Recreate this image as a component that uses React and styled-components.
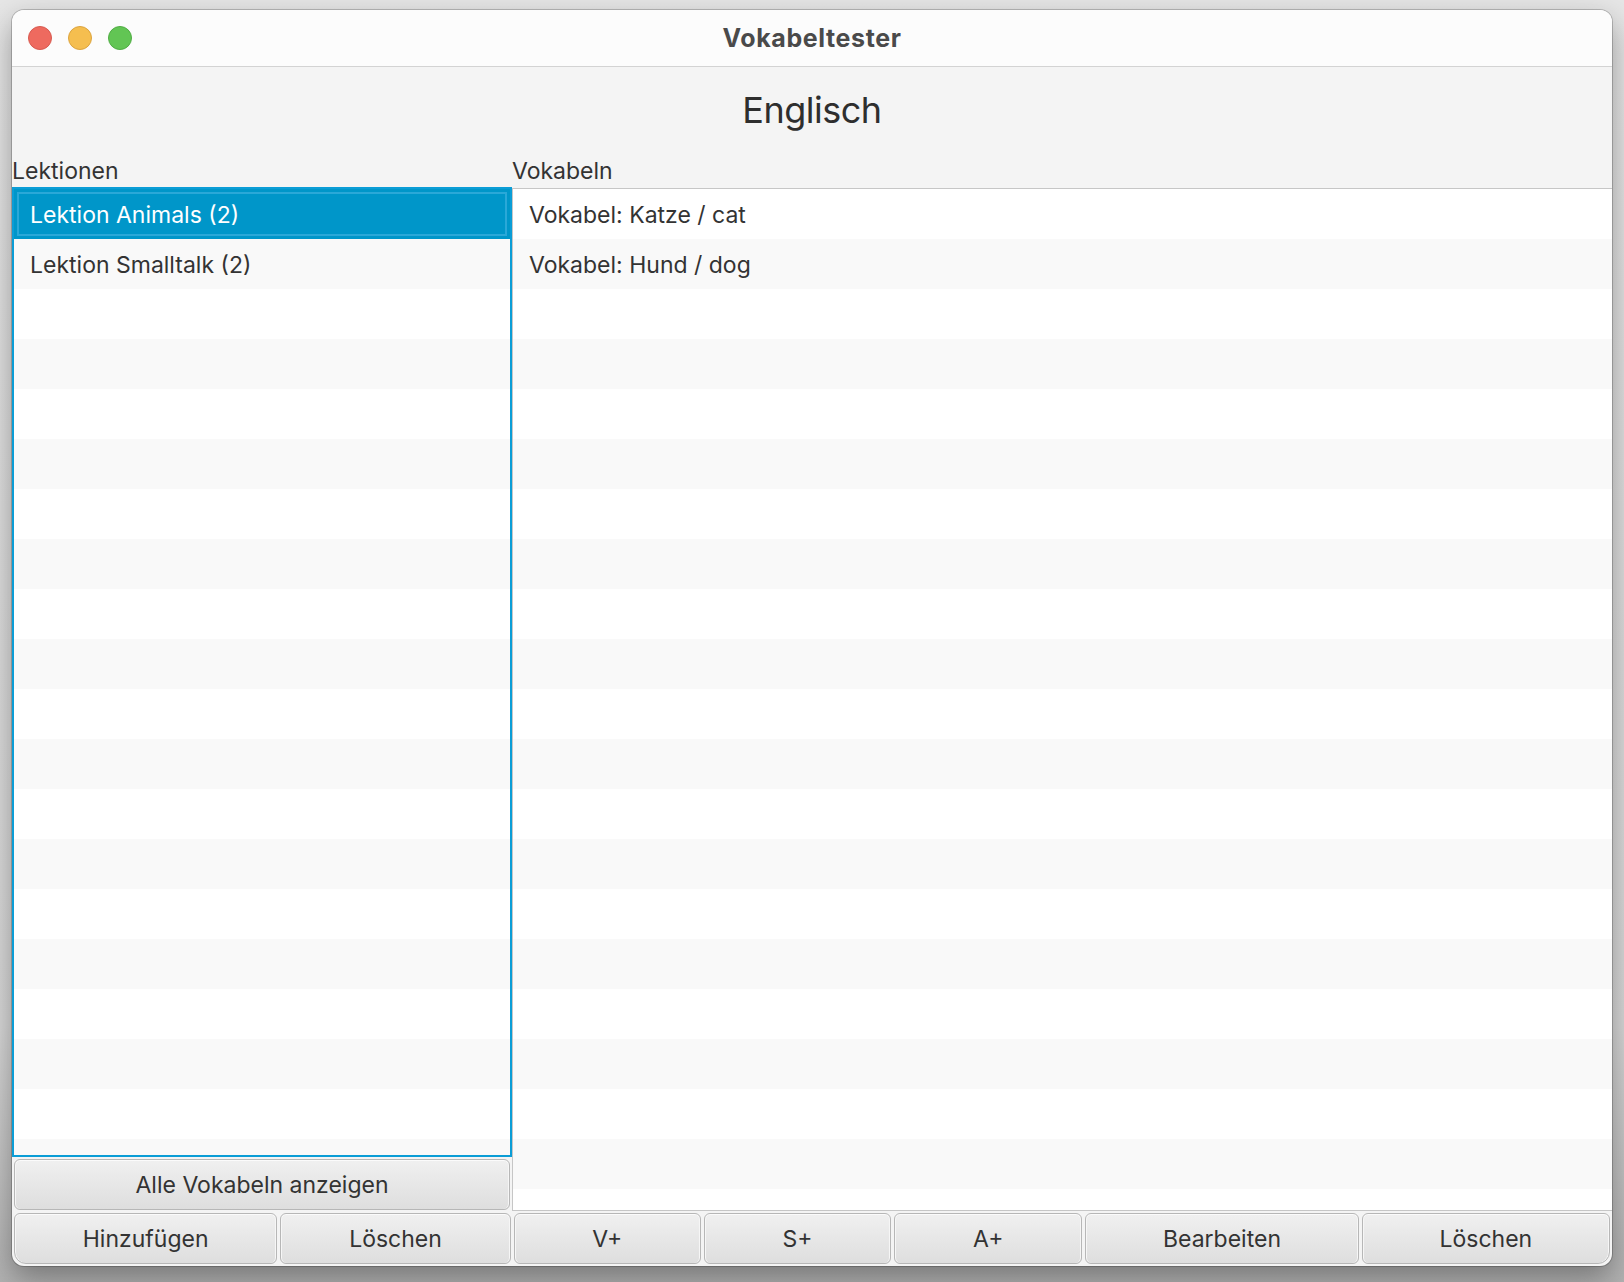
import styled, { createGlobalStyle, css } from 'styled-components';

const GlobalStyle = createGlobalStyle`
  html, body {
    margin: 0;
    padding: 0;
  }

  body {
    width: 1624px;
    height: 1282px;
    overflow: hidden;
    background: linear-gradient(180deg, #e6e6e6 0%, #d8d8d8 80%, #b2b2b2 100%);
    font-family: Inter, 'Noto Sans', 'Liberation Sans', sans-serif;
    color: #333;
  }
`;

const Desktop = styled.div`
  padding: 10px 12px 16px;
`;

const Window = styled.div`
  width: 1600px;
  height: 1256px;
  border-radius: 12px;
  overflow: hidden;
  display: flex;
  flex-direction: column;
  background: #f4f4f4;
  box-shadow: 0 0 0 1px rgba(0, 0, 0, 0.2), 0 12px 30px rgba(0, 0, 0, 0.35);
`;

const TitleBar = styled.div`
  height: 56px;
  flex-shrink: 0;
  display: grid;
  grid-template-columns: 1fr auto 1fr;
  align-items: center;
  padding: 0 16px;
  background: #fcfcfc;
  border-bottom: 1px solid #d3d3d3;
`;

const Lights = styled.div`
  display: flex;
  gap: 16px;
`;

const lightColors = {
  close: ['#ee6a5f', '#d85a50'],
  minimize: ['#f5be4f', '#dca43f'],
  zoom: ['#62c554', '#50ad44'],
};

const Light = styled.span`
  width: 24px;
  height: 24px;
  box-sizing: border-box;
  border-radius: 50%;
  background: ${({ kind }) => lightColors[kind][0]};
  border: 1px solid ${({ kind }) => lightColors[kind][1]};
`;

const WindowTitle = styled.div`
  font-size: 25px;
  font-weight: 700;
  color: #4a4a4a;
  letter-spacing: 0.6px;
`;

const Heading = styled.h1`
  margin: 0;
  height: 86px;
  flex-shrink: 0;
  display: flex;
  align-items: center;
  justify-content: center;
  font-size: 36px;
  font-weight: 400;
  letter-spacing: -0.5px;
  color: #2e2e2e;
`;

const Main = styled.div`
  flex: 1;
  min-height: 0;
  display: grid;
  grid-template-columns: 500px 1fr;
`;

const Column = styled.div`
  display: flex;
  flex-direction: column;
  min-height: 0;
`;

const Label = styled.div`
  height: 31px;
  padding-top: 3px;
  flex-shrink: 0;
  display: flex;
  align-items: center;
  font-size: 23px;
  line-height: 1;
  color: #333;
`;

const ListView = styled.div`
  flex: 1;
  min-height: 0;
  overflow: hidden;
  background: #fff;

  ${({ focused }) =>
    focused
      ? css`
          border: 2px solid #0b9dd6;
        `
      : css`
          margin: 1px 0 1px;
          border: 1px solid #c6c6c6;
          border-right: none;
        `}
`;

const Row = styled.div`
  height: 48px;
  padding: 2px 0 0 16px;
  display: flex;
  align-items: center;
  font-size: 23px;
  color: #333;
  background: ${({ odd }) => (odd ? '#f9f9f9' : '#fff')};

  ${({ selected }) =>
    selected &&
    css`
      color: #fff;
      background: #0096c9;
      box-shadow: inset 0 0 0 3px #0096c9, inset 0 0 0 5px #2aa8d8;
    `}
`;

const ButtonSlot = styled.div`
  padding: 2px;
  height: 51px;
  flex-shrink: 0;
`;

const Button = styled.button`
  width: 100%;
  height: 100%;
  box-sizing: border-box;
  padding: 0;
  font-family: inherit;
  font-size: 23px;
  color: #333;
  background: linear-gradient(180deg, #f0f0f0 0%, #dedede 100%);
  border: 1px solid #b7b7b7;
  border-radius: 6px;
  box-shadow: inset 0 1px 0 #fbfbfb, inset 1px 0 0 #f6f6f6, inset -1px 0 0 #f6f6f6;

  ${({ corner }) =>
    corner === 'left' &&
    css`
      border-bottom-left-radius: 12px;
    `}
  ${({ corner }) =>
    corner === 'right' &&
    css`
      border-bottom-right-radius: 12px;
    `}
`;

const BottomBar = styled.div`
  height: 51px;
  flex-shrink: 0;
  padding: 1px 2px 2px;
  display: grid;
  grid-template-columns: 263fr 230fr 187fr 187fr 188fr 273fr 248fr;
  gap: 3px;
`;

const lessons = ['Lektion Animals (2)', 'Lektion Smalltalk (2)'];
const words = ['Vokabel: Katze / cat', 'Vokabel: Hund / dog'];
const ROWS = 22;

const fill = (items) => Array.from({ length: ROWS }, (_, i) => items[i] || '');

const bottomButtons = [
  { label: 'Hinzufügen', corner: 'left' },
  { label: 'Löschen' },
  { label: 'V+' },
  { label: 'S+' },
  { label: 'A+' },
  { label: 'Bearbeiten' },
  { label: 'Löschen', corner: 'right' },
];

const App = () => (
  <>
    <GlobalStyle />
    <Desktop>
      <Window>
        <TitleBar>
          <Lights>
            <Light kind="close" />
            <Light kind="minimize" />
            <Light kind="zoom" />
          </Lights>
          <WindowTitle>Vokabeltester</WindowTitle>
          <span />
        </TitleBar>
        <Heading>Englisch</Heading>
        <Main>
          <Column>
            <Label>Lektionen</Label>
            <ListView focused>
              {fill(lessons).map((text, i) => (
                <Row key={i} odd={i % 2 === 1} selected={i === 0}>
                  {text}
                </Row>
              ))}
            </ListView>
            <ButtonSlot>
              <Button>Alle Vokabeln anzeigen</Button>
            </ButtonSlot>
          </Column>
          <Column>
            <Label>Vokabeln</Label>
            <ListView>
              {fill(words).map((text, i) => (
                <Row key={i} odd={i % 2 === 1}>
                  {text}
                </Row>
              ))}
            </ListView>
          </Column>
        </Main>
        <BottomBar>
          {bottomButtons.map((b, i) => (
            <Button key={i} corner={b.corner}>
              {b.label}
            </Button>
          ))}
        </BottomBar>
      </Window>
    </Desktop>
  </>
);

export default App;
